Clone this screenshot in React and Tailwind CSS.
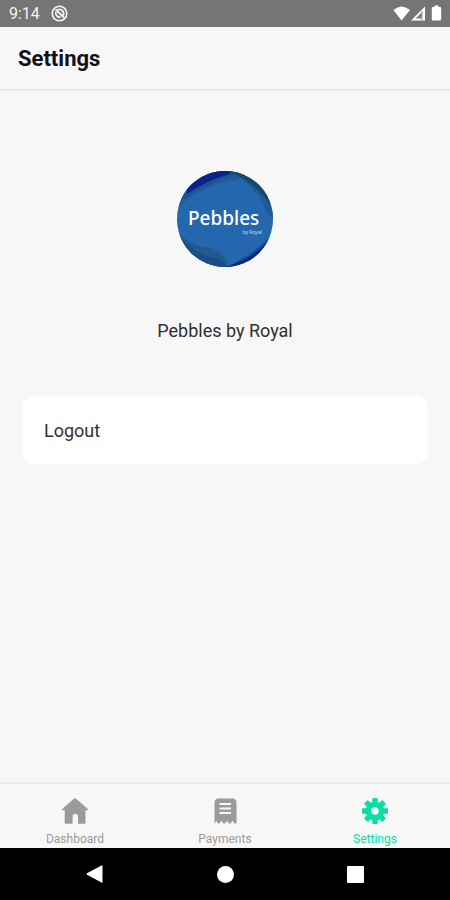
const tabs = [
  { name: "Dashboard", icon: HomeIcon },
  { name: "Payments", icon: ReceiptIcon },
  { name: "Settings", icon: GearIcon, active: true },
];

function HomeIcon() {
  return (
    <svg width="26" height="26" viewBox="0 0 26 26" fill="currentColor" aria-hidden="true">
      <path d="M13 0.300Q13.600.3 14.200.8L25.800 11q.4 1-.6 1.200H23.500V25q0 .8-.8.8H16V18.500q0-2.700-2.700-2.700t-2.700 2.700v7.300H3.500q-.8 0-.8-.8V12.200H.8q-1-.2-.6-1.200L11.800.8Q12.400.3 13 .3z" />
    </svg>
  );
}

function ReceiptIcon() {
  return (
    <svg width="26" height="26" viewBox="0 0 26 26" aria-hidden="true">
      <path
        fill="currentColor"
        d="M5 .5h17L24.500 3V25.500h-2l-2-2.700-2 2.700h-1.500l-2-2.700-2 2.700h-1.500l-2-2.700-2 2.700h-1.500l-2-2.700-1 2.700H2.500V3z"
      />
      <path stroke="#f7f7f7" strokeWidth="1.800" d="M7.500 6h11.500M7.500 10.500h11.500M7.500 15h11.500" />
    </svg>
  );
}

function GearIcon() {
  return (
    <svg width="26" height="26" viewBox="0 0 26 26" fill="currentColor" aria-hidden="true">
      {[0, 45, 90, 135].map((deg) => (
        <rect key={deg} x="10.300" y="0" width="5.400" height="26" rx="0.800" transform={`rotate(${deg} 13 13)`} />
      ))}
      <circle cx="13" cy="13" r="9.400" />
      <circle cx="13" cy="13" r="3.700" fill="#f7f7f7" />
    </svg>
  );
}

function StatusBar() {
  return (
    <div className="flex h-[27px] shrink-0 items-center bg-[#757575] pr-2 pl-[9px] text-white">
      <span className="text-base text-gray-100">9:14</span>
      <svg className="ml-[11px] text-gray-100" width="17" height="17" viewBox="0 0 17 17" fill="none" stroke="currentColor" aria-hidden="true">
        <circle cx="8.500" cy="8.500" r="7.300" strokeWidth="1.600" />
        <path strokeWidth="1.800" d="M4.500 4.500l8.500 8M6.500 4.800a4.300 4.300 0 0 1 5.700 5.700M4.800 7a4.300 4.300 0 0 0 4.700 5.200" />
      </svg>
      <svg className="ml-auto" width="49" height="17" viewBox="0 0 49 17" fill="currentColor" aria-hidden="true">
        <path d="M0.500 5Q8.500-2 17 5L8.500 15.500z" />
        <path fillRule="evenodd" d="M32 1.500v14H18zM28.500 7.500v6h-5.700z" />
        <path stroke="#757575" strokeWidth="0.800" d="M29 6v9" />
        <path d="M41.500 0.500h4V2H47q1.200 0 1.200 1.200V14.300q0 1.200-1.200 1.200h-7q-1.200 0-1.200-1.200V3.200Q38.800 2 40 2h1.500z" />
      </svg>
    </div>
  );
}

function Avatar() {
  return (
    <svg className="size-24" viewBox="0 0 96 96" role="img" aria-label="Pebbles by Royal">
      <defs>
        <clipPath id="avatar-clip">
          <circle cx="48" cy="48" r="48" />
        </clipPath>
      </defs>
      <g clipPath="url(#avatar-clip)">
        <rect width="96" height="96" fill="#2467ae" />
        <path fill="#1f5c99" d="M0 38Q22 14 62 8L78 0H0z" />
        <path fill="#1a539c" d="M8 27Q34 10 58 4L62 0H0v30z" />
        <path fill="#0b2386" d="M10 23Q30 9 53 3V0H8z" />
        <path fill="#1d5a9a" d="M52 0Q80 14 90 42L96 48V0z" />
        <path fill="#17466b" d="M50 0Q78 10 93 34L96 10V0z" />
        <path fill="#215b8e" d="M0 60Q12 75 34 77Q49 83 51 96H0z" />
        <path fill="#1c4d86" d="M3 66Q18 84 43 88L51 96H0z" />
        <path fill="#1c4c9b" d="M96 62Q79 82 49 96H96z" />
        <path fill="#09238b" d="M91 70Q75 88 49 96H96V68z" />
      </g>
      <g className="font-['Noto_Sans']">
        <text x="11" y="54" fill="#fff" fontSize="19" fontWeight="500">
          Pebbles
        </text>
        <text x="85" y="63" fill="#c9dcf2" fontSize="5" textAnchor="end">
          by Royal
        </text>
      </g>
    </svg>
  );
}

function NavBar() {
  return (
    <div className="grid h-[52px] shrink-0 grid-cols-3 bg-black text-white">
      <button type="button" aria-label="Back" className="flex items-center justify-end pr-[47px]">
        <svg width="17" height="18" viewBox="0 0 17 18" fill="currentColor">
          <path d="M1 8.200 15.500.4Q16.500 0 16.500 1v16q0 1-1 .6L1 9.800q-1-.8 0-1.600z" />
        </svg>
      </button>
      <button type="button" aria-label="Home" className="flex items-center justify-center">
        <span className="size-[17px] rounded-full bg-white" />
      </button>
      <button type="button" aria-label="Recent apps" className="flex items-center justify-start pl-[47px]">
        <span className="size-[17px] rounded-[1px] bg-white" />
      </button>
    </div>
  );
}

export default function App() {
  return (
    <div className="flex min-h-screen flex-col bg-[#f7f7f7] font-[Roboto,sans-serif] text-[#303030]">
      <StatusBar />
      <header className="flex h-16 shrink-0 items-center border-b-2 border-[#e9e9e9] px-[18px]">
        <h1 className="text-[22px] font-bold text-[#11111b]">Settings</h1>
      </header>

      <main className="flex grow flex-col items-center px-[22px] pt-20">
        <Avatar />
        <p className="mt-[52px] text-lg leading-6">Pebbles by Royal</p>
        <button type="button" className="mt-[53px] h-[68px] w-full rounded-xl bg-white px-[22px] pt-[2px] text-left text-lg">
          Logout
        </button>
      </main>

      <nav className="grid h-[66px] shrink-0 grid-cols-3 border-t-2 border-[#e9e9e9]">
        {tabs.map(({ name, icon: Icon, active }) => (
          <a
            key={name}
            href={`#${name.toLowerCase()}`}
            aria-current={active ? "page" : undefined}
            className={`flex flex-col items-center pt-[14px] ${active ? "text-[#08dfa4]" : "text-[#9b9b9b]"}`}
          >
            <Icon />
            <span className="mt-[7px] text-xs leading-4">{name}</span>
          </a>
        ))}
      </nav>
      <NavBar />
    </div>
  );
}
